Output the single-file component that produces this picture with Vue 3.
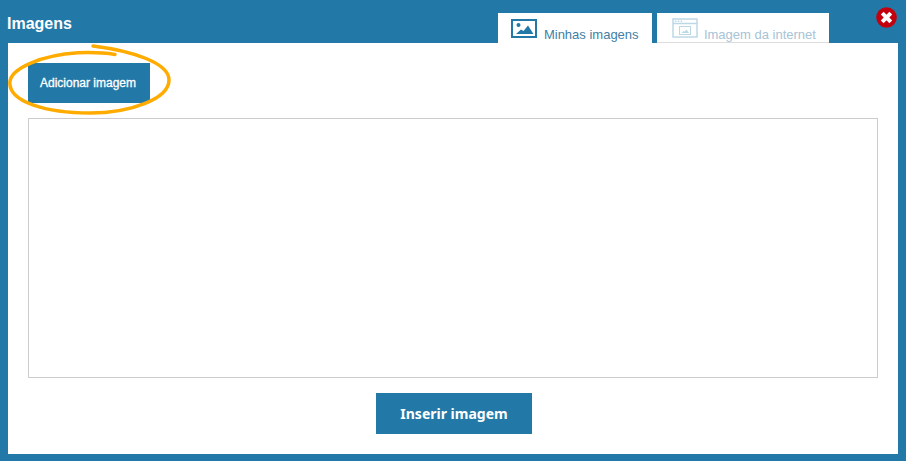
<script setup>
</script>

<template>
  <div class="modal">
    <header class="head">
      <h1 class="title">Imagens</h1>
      <nav class="tabs">
        <div class="tab active">
          <svg class="ico" width="28" height="20" viewBox="0 0 28 20">
            <rect x="1" y="1" width="24" height="17" fill="none" stroke="#2279a8" stroke-width="2" />
            <circle cx="7.500" cy="6" r="2" fill="#2279a8" />
            <path d="M5 15 L10 10.500 L12.500 12 L17 6.500 L22.500 15 Z" fill="#2279a8" />
          </svg>
          <span>Minhas imagens</span>
        </div>
        <div class="tab inactive">
          <svg class="ico" width="28" height="20" viewBox="0 0 28 20">
            <rect x="1" y="1" width="24" height="18" fill="none" stroke="#bcd8e6" stroke-width="1.500" />
            <path d="M1 5.500 H25" stroke="#bcd8e6" stroke-width="1.500" />
            <path d="M3 3.200 H4.500 M5.800 3.200 H7.300 M8.600 3.200 H10" stroke="#bcd8e6" stroke-width="1.400" />
            <rect x="7.500" y="8.500" width="11" height="8" fill="none" stroke="#bcd8e6" />
            <path d="M9.500 15 L11.500 13 L12.500 13.700 L14.500 11.500 L17 15 Z" fill="#bcd8e6" />
          </svg>
          <span>Imagem da internet</span>
        </div>
      </nav>
      <button class="close" type="button" aria-label="Fechar">
        <svg width="21" height="21" viewBox="0 0 21 21">
          <circle cx="10.500" cy="10.500" r="10.300" fill="#c4000f" />
          <path d="M6.200 6.200 L14.800 14.800 M14.800 6.200 L6.200 14.800" stroke="#fff" stroke-width="4" />
        </svg>
      </button>
    </header>

    <main class="body">
      <div class="toolbar">
        <button class="add" type="button">Adicionar imagem</button>
        <svg class="ring" width="166" height="76" viewBox="0 0 166 76">
          <path
            d="M107 10.500 C95 8.500 82 8.300 70 8.800 C35 11 1.800 24 1.800 39 C1.800 58 38 69 82 69 C122 69 161 55 161 36 C161 19 125 7 85 2"
            fill="none"
            stroke="#ffab00"
            stroke-width="3.500"
            stroke-linecap="round"
          />
        </svg>
      </div>
      <div class="gallery"></div>
      <div class="footer">
        <button class="insert" type="button">Inserir imagem</button>
      </div>
    </main>
  </div>
</template>

<style scoped>
.modal {
  position: relative;
  width: 906px;
  height: 461px;
  box-sizing: border-box;
  padding: 0 8px 7px;
  background: #2279a8;
  display: flex;
  flex-direction: column;
  overflow: hidden;
  font-family: "Liberation Sans", Arial, sans-serif;
}
.head {
  height: 43px;
  flex: none;
  display: flex;
  align-items: flex-start;
}
.title {
  margin: 15px 0 0 -1px;
  font-size: 16px;
  line-height: 18px;
  font-weight: 700;
  color: #fff;
}
.tabs {
  margin-left: 426px;
  margin-top: 13px;
  display: flex;
  gap: 5px;
}
.tab {
  height: 30px;
  box-sizing: border-box;
  background: #fff;
  display: flex;
  align-items: flex-start;
  font-size: 13px;
  line-height: 16px;
}
.tab span {
  margin-top: 14px;
}
.ico {
  flex: none;
  margin-top: 5px;
  margin-right: 5px;
}
.active {
  width: 154px;
  padding-left: 13px;
  color: #3f7fa6;
}
.active .ico {
  margin-top: 6px;
}
.inactive {
  width: 172px;
  padding-left: 15px;
  color: #a7c3d6;
  border-bottom: 1px solid #dddddd;
}
.inactive .ico {
  margin-right: 4px;
}
.close {
  position: absolute;
  left: 876px;
  top: 7px;
  width: 21px;
  height: 21px;
  padding: 0;
  border: 0;
  background: none;
  display: block;
}
.close svg {
  display: block;
}
.body {
  flex: 1;
  background: #fff;
  padding: 20px 20px 20px;
  display: flex;
  flex-direction: column;
}
.toolbar {
  position: relative;
  height: 40px;
  flex: none;
}
.add {
  width: 122px;
  height: 40px;
  padding: 0 2px 0 0;
  border: 0;
  background: #2279a8;
  color: #fff;
  font: 400 12px "Liberation Sans", Arial, sans-serif;
  -webkit-text-stroke: 0.3px #fff;
}
.ring {
  position: absolute;
  left: -20px;
  top: -19px;
  pointer-events: none;
}
.gallery {
  margin-top: 15px;
  height: 260px;
  box-sizing: border-box;
  border: 1px solid #cccccc;
  flex: none;
}
.footer {
  margin-top: 15px;
  display: flex;
  justify-content: center;
}
.insert {
  width: 156px;
  height: 41px;
  margin-left: 2px;
  padding: 0;
  border: 0;
  background: #2279a8;
  color: #fff;
  font: 700 14px "Noto Sans", "Open Sans", sans-serif;
}
</style>
